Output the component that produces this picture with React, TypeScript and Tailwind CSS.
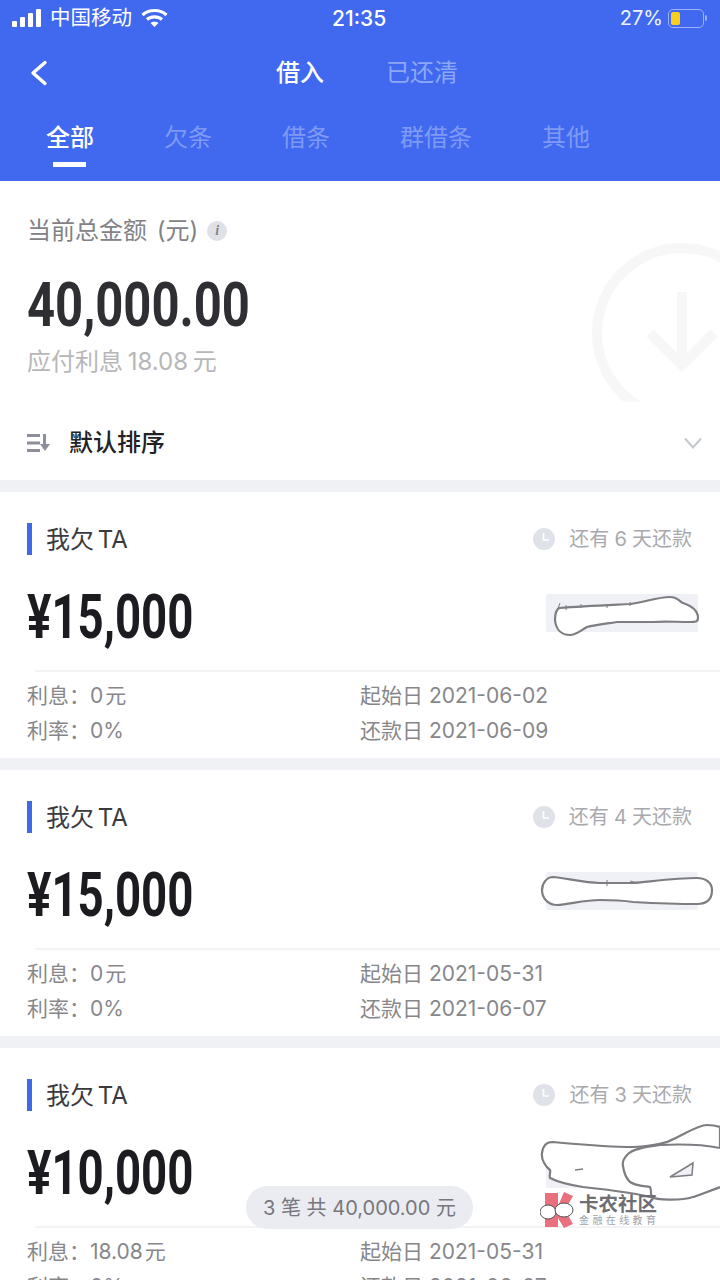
import type { ReactNode } from 'react'

const font = "font-['Inter','Noto_Sans_CJK_SC',sans-serif]"

interface Loan {
  due: string
  amount: string
  interest: string
  rate: string
  start: string
  end: string
  scribble: ReactNode
}

const loans: Loan[] = [
  {
    due: '还有 6 天还款',
    amount: '¥15,000',
    interest: '0 元',
    rate: '0%',
    start: '2021-06-02',
    end: '2021-06-09',
    scribble: (
      <>
        <rect x="546" y="102" width="152" height="38" rx="2" fill="#f0f1f6" />
        <path
          d="M559 116C585 114 610 113 630 112C645 110 658 105 670 105C678 105 680 110 683 111C692 114 698 119 698 126C698 130 695 130 690 130C675 130 665 129 653 130C640 130 628 130 617 130C604 132 595 133 587 135C580 139 576 143 570 143C562 143 556 138 555 128C555 122 556 118 559 116Z"
          fill="#fff"
          stroke="#7d7d82"
          strokeWidth="2.2"
        />
        <path d="M560 111L556 122M566 113V118M581 112V116M607 112V116M630 110V114" stroke="#7d7d82" strokeWidth="1" />
      </>
    ),
  },
  {
    due: '还有 4 天还款',
    amount: '¥15,000',
    interest: '0 元',
    rate: '0%',
    start: '2021-05-31',
    end: '2021-06-07',
    scribble: (
      <>
        <rect x="546" y="102" width="152" height="38" rx="2" fill="#f0f1f6" />
        <path
          d="M542 120C542 113 547 107 553 107C565 108 585 113 600 113C612 113 622 113 633 113C655 111 678 108 697 108C706 108 712 113 712 120C712 128 708 134 697 134C675 134 652 133 633 132C620 130 610 130 600 130C585 130 570 134 557 135C548 135 542 128 542 120Z"
          fill="#fff"
          stroke="#7d7d82"
          strokeWidth="2.2"
        />
        <path d="M607 110V116M630 111L638 113" stroke="#7d7d82" strokeWidth="1" />
      </>
    ),
  },
  {
    due: '还有 3 天还款',
    amount: '¥10,000',
    interest: '18.08 元',
    rate: '0%',
    start: '2021-05-31',
    end: '2021-06-07',
    scribble: (
      <>
        <rect x="546" y="102" width="152" height="38" rx="2" fill="#f0f1f6" />
        <path
          d="M542 105C543 98 546 94 552 94C575 96 605 99 633 99C650 99 660 96 667 94C682 88 697 77 707 77C712 77 717 78 720 79L720 139L693 149L650 149C640 146 610 142 583 139C570 137 558 134 550 130C549 126 551 124 550 122C546 119 541 112 542 105Z"
          fill="#fff"
          stroke="#7d7d82"
          strokeWidth="2.2"
        />
        <path
          d="M720 100C700 96 680 96 660 97C645 99 633 101 628 106C624 110 622 114 623 118C624 126 626 130 630 134C636 138 645 138 650 139C652 143 650 147 652 149C656 152 680 153 693 149C700 147 712 142 720 139"
          fill="#fff"
          stroke="#7d7d82"
          strokeWidth="2.2"
        />
        <path d="M670 129L693 115L692 127Z" fill="#f0f1f6" stroke="#7d7d82" strokeWidth="1.5" />
        <path d="M575 122L583 121" stroke="#7d7d82" strokeWidth="1.5" />
      </>
    ),
  },
]

function StatusBar() {
  return (
    <div className="relative flex h-[36px] items-center pl-[12px] pr-[13px] text-white">
      <svg width="30" height="18" viewBox="0 0 30 18" fill="#fff">
        <rect x="0" y="12" width="5" height="6" rx="1" />
        <rect x="8" y="8" width="5" height="10" rx="1" />
        <rect x="16" y="4" width="5" height="14" rx="1" />
        <rect x="24" y="0" width="5" height="18" rx="1" />
      </svg>
      <span className="ml-[8px] text-[20.5px] leading-none">中国移动</span>
      <svg className="ml-[9px]" width="27" height="20" viewBox="0 0 27 20" fill="none" stroke="#fff" strokeWidth="3.2">
        <path d="M1.5 7C8 1 19 1 25.5 7" />
        <path d="M6 11.5C10 8 17 8 21 11.5" />
        <path d="M13.5 19L9.5 15C11.5 13.3 15.5 13.3 17.5 15Z" fill="#fff" stroke="none" />
      </svg>
      <span className="absolute left-[332px] text-[21px] leading-none font-medium">21:35</span>
      <span className="ml-auto text-[20px] leading-none text-[#f0f3ff]">27%</span>
      <div className="ml-[5px] flex h-[19px] w-[36px] items-center rounded-[5px] border border-[#9db2f7] p-[2px]">
        <div className="h-full w-[9px] rounded-[2px] bg-[#f9cf1c]" />
      </div>
      <div className="ml-[1px] h-[6px] w-[2px] rounded-r-sm bg-[#9db2f7]" />
    </div>
  )
}

function Header() {
  return (
    <div className="h-[181px] bg-[#4069f0]">
      <StatusBar />
      <div className="flex h-[74px] items-center">
        <svg className="ml-[30px]" width="18" height="26" viewBox="0 0 18 26" fill="none" stroke="#fff" strokeWidth="3.4" strokeLinecap="round" strokeLinejoin="round">
          <path d="M15 2.5L3 13L15 23.5" />
        </svg>
        <div className="ml-[228px] flex gap-[62px] text-[24px] leading-none">
          <span className="font-medium text-white">借入</span>
          <span className="text-[#8ea6f6]">已还清</span>
        </div>
      </div>
      <div className="flex gap-[70px] pl-[46px] pt-[13px] text-[24px] leading-[30px] text-[#7f9af5]">
        <div className="relative font-medium text-white">
          全部
          <div className="absolute left-[7px] top-[39px] h-[5px] w-[33px] bg-white" />
        </div>
        <span>欠条</span>
        <span>借条</span>
        <span>群借条</span>
        <span>其他</span>
      </div>
    </div>
  )
}

function Summary() {
  return (
    <section className="relative h-[299px] overflow-hidden bg-white px-[27px] pt-[35px]">
      <svg className="absolute left-[580px] top-[50px]" width="140" height="171" viewBox="0 0 140 171" fill="none" stroke="#f7f7f8" strokeWidth="10">
        <circle cx="102" cy="102" r="85" />
        <path d="M102 61V132" />
        <path d="M70 102L102 134L134 102" />
      </svg>
      <div className="relative flex h-[30px] items-center">
        <span className="text-[24px] leading-none text-[#828286] [word-spacing:3px]">当前总金额 (元)</span>
        <span className="ml-[9px] flex h-[20px] w-[20px] items-center justify-center rounded-full bg-[#dfe1e6] font-['Liberation_Serif',serif] text-[14px] font-bold italic leading-none text-[#85858a]">
          i
        </span>
      </div>
      <div className="relative mt-[27px] h-[64px] origin-left scale-x-[0.79] font-['Roboto',sans-serif] text-[62px] font-bold leading-[64px] text-[#2f2f33] whitespace-nowrap">
        40,000.00
      </div>
      <div className="relative mt-[10px] text-[24px] leading-[30px] text-[#b7b7ba] [word-spacing:-2px]">应付利息 18.08 元</div>
      <div className="relative mt-[51px] flex h-[30px] items-center">
        <svg width="24" height="20" viewBox="0 0 24 20" fill="#8c8f99">
          <rect x="0" y="1" width="13" height="3" />
          <rect x="0" y="8.5" width="13" height="3" />
          <rect x="0" y="16" width="13" height="3" />
          <rect x="16" y="1" width="3" height="12" />
          <path d="M13 11H23L18 18Z" />
        </svg>
        <span className="ml-[18px] text-[24px] leading-none font-medium text-[#222226]">默认排序</span>
        <svg className="ml-auto mr-[-9px]" width="18" height="12" viewBox="0 0 18 12" fill="none" stroke="#c6c8d0" strokeWidth="2">
          <path d="M1 1.5L9 10.5L17 1.5" />
        </svg>
      </div>
    </section>
  )
}

function LoanCard({ loan }: { loan: Loan }) {
  return (
    <section className="relative h-[266px] bg-white pl-[27px] pt-[31px]">
      <svg className="absolute left-0 top-0" width="720" height="266" viewBox="0 0 720 266">
        {loan.scribble}
      </svg>
      <div className="relative flex h-[32px] items-center pr-[28px]">
        <div className="h-[32px] w-[5px] bg-[#4069e8]" />
        <span className="ml-[14px] pt-[1px] text-[24px] leading-none text-[#3a3a3e] [word-spacing:-3px]">我欠 TA</span>
        <svg className="ml-auto" width="22" height="22" viewBox="0 0 22 22">
          <circle cx="11" cy="11" r="11" fill="#dfe3e9" />
          <path d="M10.5 5V12H16" fill="none" stroke="#fff" strokeWidth="1.6" />
        </svg>
        <span className="ml-[14px] text-[20px] leading-none text-[#a9a9ad] [word-spacing:-0.5px]">{loan.due}</span>
      </div>
      <div className="relative mt-[31px] h-[62px] origin-left scale-x-[0.735] font-['Roboto',sans-serif] text-[62px] font-bold leading-[62px] text-[#1c1c20] whitespace-nowrap">
        {loan.amount}
      </div>
      <div className="relative ml-[8px] mt-[22px] h-[2px] bg-[#f2f3f5]" />
      <div className="relative mt-[12px] grid grid-cols-[333px_1fr] gap-y-[11px] text-[21px] leading-[24px] text-[#87878b]">
        <span className="[word-spacing:-4px]">利息：{loan.interest}</span>
        <span>起始日 {loan.start}</span>
        <span>利率：{loan.rate}</span>
        <span>还款日 {loan.end}</span>
      </div>
    </section>
  )
}

export default function App() {
  return (
    <div className={`relative h-[1280px] w-[720px] overflow-hidden bg-[#eff1f5] ${font}`}>
      <Header />
      <Summary />
      <div className="mt-[12px] flex flex-col gap-[12px]">
        {loans.map((loan, i) => (
          <LoanCard key={i} loan={loan} />
        ))}
      </div>
      <div className="absolute left-[246px] top-[1186px] flex h-[43px] w-[227px] items-center justify-center rounded-full bg-[#ebecf1] text-[20px] leading-none text-[#77777c]">
        3 笔 共 40,000.00 元
      </div>
      <div className="absolute left-[540px] top-[1192px] flex items-center">
        <svg width="38" height="36" viewBox="0 0 38 36">
          <path d="M5 1H18V14L24 0L33 4L25 18L33 32L24 36L18 26V35H5Z" fill="#e9707c" />
          <ellipse cx="8" cy="20" rx="8" ry="7" fill="#fff" stroke="#555" strokeWidth="1" />
          <ellipse cx="24" cy="18" rx="9" ry="7" fill="#fff" stroke="#555" strokeWidth="1" />
        </svg>
        <div className="ml-[1px] flex flex-col items-start">
          <span className="text-[19.5px] font-bold leading-[20px] text-[#6f6f73]">卡农社区</span>
          <span className="text-[10px] leading-[13px] tracking-[3.4px] text-[#a2a2a6]">金融在线教育</span>
        </div>
      </div>
    </div>
  )
}
